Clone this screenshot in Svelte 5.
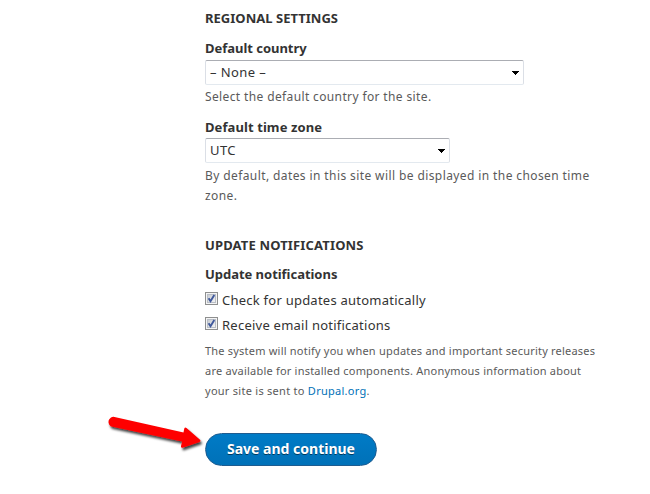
<script lang="ts">
	interface Option {
		id: string;
		label: string;
		checked: boolean;
	}

	let country = $state('– None –');
	let timezone = $state('UTC');

	let options = $state<Option[]>([
		{ id: 'check', label: 'Check for updates automatically', checked: true },
		{ id: 'email', label: 'Receive email notifications', checked: true }
	]);

	function toggle(option: Option) {
		option.checked = !option.checked;
	}
</script>

{#snippet dropdown(value: string, size: string)}
	<div class="select {size}" role="combobox" tabindex="0" aria-expanded="false" aria-controls="options">
		<span>{value}</span>
		<svg width="7" height="4" viewBox="0 0 7 4" shape-rendering="crispEdges">
			<path d="M0 0h7v1H0zM1 1h5v1H1zM2 2h3v1H2zM3 3h1v1H3z" />
		</svg>
	</div>
{/snippet}

<main>
	<section class="regional">
		<h2>REGIONAL SETTINGS</h2>
		<div class="field">
			<h3 class="country">Default country</h3>
			{@render dropdown(country, 'wide')}
			<p class="description short">Select the default country for the site.</p>
		</div>
		<div class="field">
			<h3 class="zone">Default time zone</h3>
			{@render dropdown(timezone, 'narrow')}
			<p class="description">
				By default, dates in this site will be displayed in the chosen time<br />zone.
			</p>
		</div>
	</section>

	<section class="updates">
		<h2 class="notify">UPDATE NOTIFICATIONS</h2>
		<h3>Update notifications</h3>
		<div class="options">
			{#each options as option (option.id)}
				<button
					type="button"
					class="option {option.id}"
					role="checkbox"
					aria-checked={option.checked}
					onclick={() => toggle(option)}
				>
					<svg width="13" height="13" viewBox="0 0 13 13">
						<defs>
							<linearGradient id="fill-{option.id}" x1="0" y1="0" x2="1" y2="1">
								<stop offset="0" stop-color="#c6cad0" />
								<stop offset="1" stop-color="#f6f6f6" />
							</linearGradient>
						</defs>
						<rect x="0.5" y="0.5" width="12" height="12" fill="#f4f4f4" stroke="#8e8f8f" />
						<rect x="2.5" y="2.5" width="8" height="8" fill="url(#fill-{option.id})" stroke="#b9bec6" />
						{#if option.checked}
							<path d="M3.6 6.2 5.5 9.2 9.3 3" fill="none" stroke="#40599c" stroke-width="1.9" />
						{/if}
					</svg>
					<span>{option.label}</span>
				</button>
			{/each}
		</div>
		<p class="note">
			The system will notify you when updates and important security releases<br />
			are available for installed components. Anonymous information about<br />
			<span class="last">your site is sent to <a href="#drupal">Drupal.org</a>.</span>
		</p>
	</section>

	<button type="button" class="submit"><span>Save and continue</span></button>

	<svg class="arrow" width="110" height="46" viewBox="0 0 110 46">
		<defs>
			<filter id="shadow" x="-10%" y="-20%" width="120%" height="150%">
				<feDropShadow dx="1.5" dy="2.5" stdDeviation="1.2" flood-color="#000" flood-opacity="0.75" />
			</filter>
		</defs>
		<path
			filter="url(#shadow)"
			fill="#fe0000"
			d="M10.500 5.900 79.500 21.600 80.300 17.600Q81 15.900 82.500 17L96 28.800Q97.300 30.200 95.500 30.900L78.500 36.700Q76.500 37 77 35L78.200 30.400 8.500 15.800A5 5 0 0 1 10.500 5.900Z"
		/>
	</svg>
</main>

<style>
	:global(body) {
		background: #fff;
	}
	main {
		position: relative;
		box-sizing: border-box;
		width: 650px;
		height: 494px;
		padding: 8px 0 0 205px;
		overflow: hidden;
		font-family: 'Noto Sans', 'Open Sans', sans-serif;
		font-size: 13px;
		color: #333;
	}
	h2,
	h3,
	p {
		margin: 0;
		white-space: nowrap;
	}
	h2,
	h3 {
		font-size: 13px;
		font-weight: 700;
		line-height: 20px;
	}
	h2 {
		letter-spacing: 0.02px;
		margin-bottom: 10px;
	}
	h3 {
		letter-spacing: -0.03px;
	}
	.zone {
		letter-spacing: 0.09px;
	}
	.field {
		margin-bottom: 10px;
	}
	.select {
		box-sizing: border-box;
		display: flex;
		align-items: center;
		justify-content: space-between;
		height: 25px;
		margin-top: 2px;
		padding: 0 4px;
		border: 1px solid #dbdfe6;
		border-top-color: #abadb3;
		border-bottom-color: #e3e9ef;
		border-radius: 2px;
		letter-spacing: 0.4px;
		line-height: 18px;
		background: #fff;
	}
	.select span {
		margin-top: -2px;
	}
	.wide {
		width: 319px;
	}
	.narrow {
		width: 245px;
		margin-top: 1px;
	}
	.description {
		margin-top: 3px;
		font-size: 12px;
		line-height: 20px;
		letter-spacing: 0.4px;
		color: #5a5a5a;
	}
	.short {
		margin-top: 2px;
		letter-spacing: 0.37px;
	}
	.updates {
		margin-top: 29px;
	}
	h2.notify {
		margin-bottom: 9px;
		letter-spacing: 0.15px;
	}
	.options {
		margin-top: 3px;
	}
	.option {
		display: flex;
		align-items: center;
		gap: 4px;
		height: 25px;
		padding: 0;
		border: 0;
		background: none;
		font: inherit;
		color: inherit;
		letter-spacing: 0.24px;
	}
	.option svg {
		margin-top: -3px;
	}
	.note {
		margin-top: 4px;
		font-size: 11px;
		line-height: 20px;
		letter-spacing: 0.21px;
		color: #5a5a5a;
	}
	.last {
		letter-spacing: 0.27px;
	}
	.note a {
		color: #0071b8;
		text-decoration: none;
	}
	.submit {
		display: flex;
		align-items: center;
		justify-content: center;
		width: 172px;
		height: 33px;
		margin-top: 32px;
		padding: 0 0 2px;
		border: 1px solid #1e5c90;
		border-radius: 17px;
		background: linear-gradient(#007bc6, #0071b8);
		color: #fff;
		font: 700 14px 'Noto Sans', 'Open Sans', sans-serif;
		text-shadow: 0 1px rgba(0, 0, 0, 0.5);
	}
	.arrow {
		position: absolute;
		left: 104px;
		top: 411px;
	}
</style>
